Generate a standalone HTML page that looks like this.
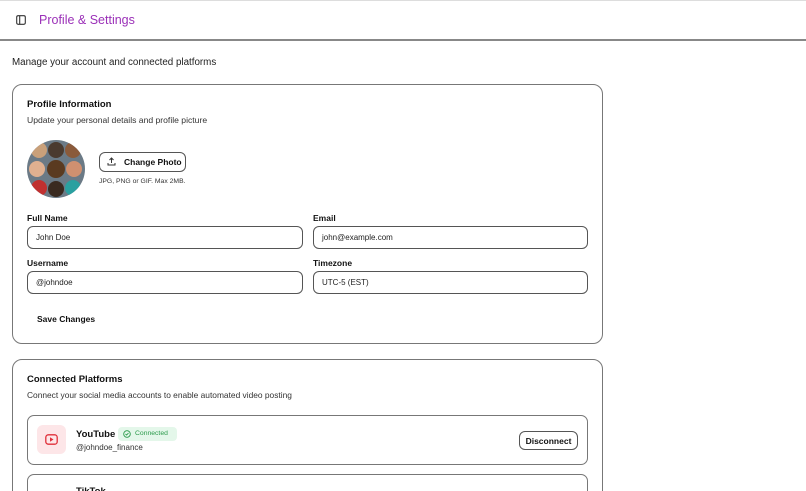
<!DOCTYPE html><html style="width:806px;height:491px;overflow:hidden"><head><style>
*{box-sizing:border-box;margin:0;padding:0}
body{width:806px;height:491px;overflow:hidden;background:#fff;font-family:"Liberation Sans",sans-serif;color:#111;position:relative}
.a{position:absolute}
.card{position:absolute;border:1px solid #777;border-radius:10px;background:#fff}
.lbl{font-size:8.5px;font-weight:bold}
.inp{position:absolute;border:1px solid #555;border-radius:6px;height:23px;font-size:8px;padding:6px 8px;color:#222}
</style></head><body>
<div class="a" style="top:0;left:0;width:806px;height:1px;background:#ddd"></div>
<svg class="a" style="left:16px;top:15px" width="10" height="10" viewBox="0 0 10 10"><rect x="0.7" y="0.7" width="8.6" height="8.6" rx="1.5" fill="none" stroke="#333" stroke-width="1.1"/><line x1="3.7" y1="1" x2="3.7" y2="9" stroke="#333" stroke-width="1.1"/></svg>
<div class="a" style="left:39px;top:13px;font-size:12.5px;color:#9b30b8">Profile &amp; Settings</div>
<div class="a" style="top:39px;left:0;width:806px;height:2px;background:#888"></div>
<div class="a" style="left:12px;top:57px;font-size:9.8px;color:#222">Manage your account and connected platforms</div>
<div class="card" style="left:12px;top:84px;width:591px;height:260px"></div>
<div class="a" style="left:27px;top:99px;font-size:9.5px;font-weight:bold">Profile Information</div>
<div class="a" style="left:27px;top:115px;font-size:8.6px;color:#333">Update your personal details and profile picture</div>
<svg class="a" style="left:27px;top:140px" width="58" height="58" viewBox="0 0 58 58"><defs><clipPath id="c"><circle cx="29" cy="29" r="29"/></clipPath></defs><g clip-path="url(#c)"><rect width="58" height="58" fill="#6b7a86"/>
<circle cx="12" cy="10" r="8" fill="#c9a07a"/><circle cx="29" cy="10" r="8" fill="#4a3a2f"/><circle cx="46" cy="10" r="8" fill="#8a5a3a"/>
<circle cx="10" cy="29" r="8" fill="#e0b090"/><circle cx="29" cy="29" r="9" fill="#5a3a20"/><circle cx="47" cy="29" r="8" fill="#d09070"/>
<circle cx="12" cy="48" r="8" fill="#c03030"/><circle cx="29" cy="49" r="8" fill="#3a2a20"/><circle cx="46" cy="48" r="8" fill="#2aa0a0"/></g></svg>
<div class="a" style="left:99px;top:152px;width:87px;height:20px;border:1px solid #555;border-radius:6px;font-size:8.5px;font-weight:bold;padding:4px 0 0 24px">Change Photo</div>
<svg class="a" style="left:107px;top:157px" width="9" height="9" viewBox="0 0 9 9" fill="none" stroke="#333" stroke-width="1"><path d="M4.5 6V1M2.5 3L4.5 1 6.5 3M1 6v2h7V6"/></svg>
<div class="a" style="left:99px;top:178px;font-size:6.8px;color:#333">JPG, PNG or GIF. Max 2MB.</div>
<div class="a lbl" style="left:27px;top:213px">Full Name</div>
<div class="a lbl" style="left:313px;top:213px">Email</div>
<div class="inp" style="left:27px;top:226px;width:276px">John Doe</div>
<div class="inp" style="left:313px;top:226px;width:275px">john@example.com</div>
<div class="a lbl" style="left:27px;top:258px">Username</div>
<div class="a lbl" style="left:313px;top:258px">Timezone</div>
<div class="inp" style="left:27px;top:271px;width:276px">@johndoe</div>
<div class="inp" style="left:313px;top:271px;width:275px">UTC-5 (EST)</div>
<div class="a" style="left:37px;top:314px;font-size:8.5px;font-weight:bold">Save Changes</div>
<div class="card" style="left:12px;top:359px;width:591px;height:160px"></div>
<div class="a" style="left:27px;top:374px;font-size:9.5px;font-weight:bold">Connected Platforms</div>
<div class="a" style="left:27px;top:390px;font-size:8.4px;color:#333">Connect your social media accounts to enable automated video posting</div>
<div class="a" style="left:27px;top:415px;width:561px;height:50px;border:1px solid #777;border-radius:7px"></div>
<div class="a" style="left:37px;top:425px;width:29px;height:29px;background:#fde6e8;border-radius:6px"></div>
<svg class="a" style="left:45px;top:434px" width="13" height="11" viewBox="0 0 13 11"><rect x="0.8" y="0.8" width="11.4" height="9.4" rx="2.5" fill="none" stroke="#e0303a" stroke-width="1.3"/><path d="M5 3.3L8.5 5.5 5 7.7Z" fill="#e0303a"/></svg>
<div class="a" style="left:76px;top:429px;font-size:9.5px;font-weight:bold">YouTube</div>
<div class="a" style="left:118px;top:427px;width:59px;height:14px;background:#e4f7ea;border-radius:4px;font-size:6.8px;color:#2a9a4a;padding:3px 0 0 17px">Connected</div>
<svg class="a" style="left:123px;top:430px" width="8" height="8" viewBox="0 0 8 8" fill="none" stroke="#2a9a4a" stroke-width="0.9"><circle cx="4" cy="4" r="3.3"/><path d="M2.5 4L3.6 5 5.5 3"/></svg>
<div class="a" style="left:76px;top:443px;font-size:8px;color:#333">@johndoe_finance</div>
<div class="a" style="left:519px;top:431px;width:59px;height:19px;border:1px solid #555;border-radius:6px;font-size:8.5px;font-weight:bold;text-align:center;padding-top:4px">Disconnect</div>
<div class="a" style="left:27px;top:474px;width:561px;height:50px;border:1px solid #777;border-radius:7px"></div>
<div class="a" style="left:76px;top:486px;font-size:9.5px;font-weight:bold">TikTok</div>
</body></html>
